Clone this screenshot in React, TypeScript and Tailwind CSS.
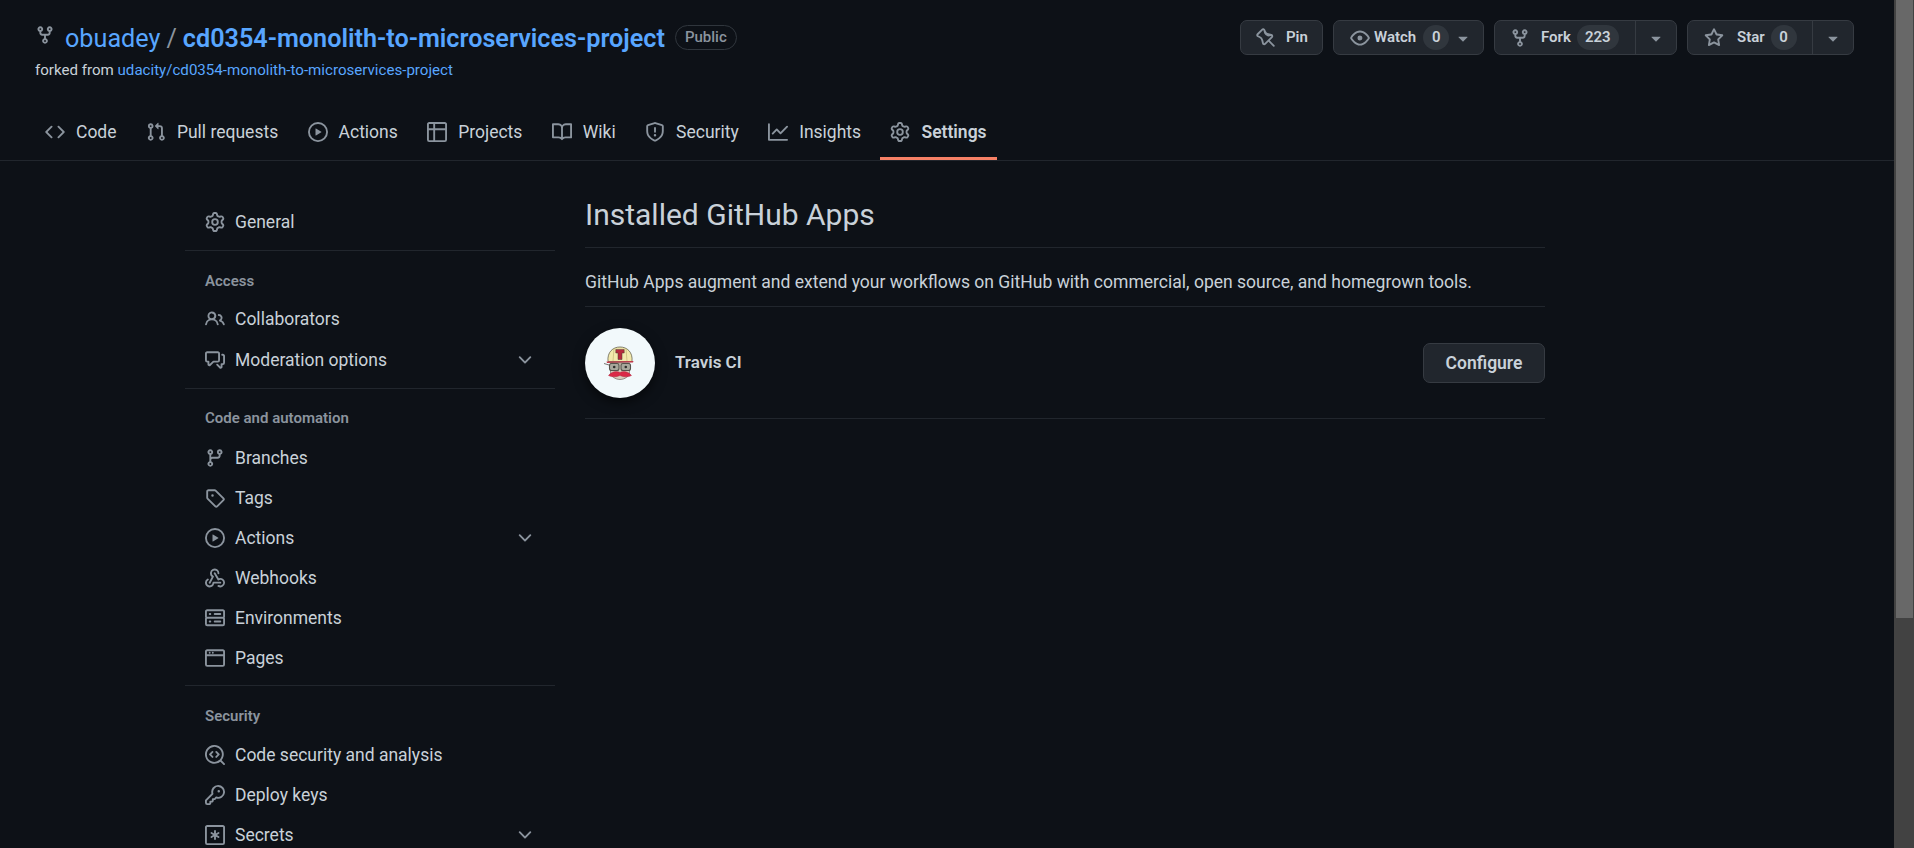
import type { ReactNode } from "react";

const icons: Record<string, ReactNode> = {
  fork: <path d="M5 5.372v.878c0 .414.336.75.75.75h4.5a.75.75 0 0 0 .75-.75v-.878a2.25 2.25 0 1 1 1.5 0v.878a2.25 2.25 0 0 1-2.25 2.25h-1.5v2.128a2.251 2.251 0 1 1-1.5 0V8.5h-1.5A2.25 2.25 0 0 1 3.5 6.25v-.878a2.25 2.25 0 1 1 1.5 0ZM5 3.25a.75.75 0 1 0-1.5 0 .75.75 0 0 0 1.5 0Zm6.75.75a.75.75 0 1 0 0-1.5.75.75 0 0 0 0 1.5Zm-3 8.75a.75.75 0 1 0-1.5 0 .75.75 0 0 0 1.5 0Z" />,
  code: <path d="m11.28 3.22 4.25 4.25a.75.75 0 0 1 0 1.06l-4.25 4.25a.749.749 0 0 1-1.275-.326.749.749 0 0 1 .215-.734L13.94 8l-3.72-3.72a.749.749 0 0 1 .326-1.275.749.749 0 0 1 .734.215Zm-6.56 0a.751.751 0 0 1 1.042.018.751.751 0 0 1 .018 1.042L2.06 8l3.72 3.72a.749.749 0 0 1-.326 1.275.749.749 0 0 1-.734-.215L.47 8.53a.75.75 0 0 1 0-1.06Z" />,
  pull: <path d="M1.5 3.25a2.25 2.25 0 1 1 3 2.122v5.256a2.251 2.251 0 1 1-1.5 0V5.372A2.25 2.25 0 0 1 1.5 3.25Zm5.677-.177L9.573.677A.25.25 0 0 1 10 .854V2.5h1A2.5 2.5 0 0 1 13.5 5v5.628a2.251 2.251 0 1 1-1.5 0V5a1 1 0 0 0-1-1h-1v1.646a.25.25 0 0 1-.427.177L7.177 3.427a.25.25 0 0 1 0-.354ZM3.75 2.5a.75.75 0 1 0 0 1.5.75.75 0 0 0 0-1.5Zm0 9.5a.75.75 0 1 0 0 1.5.75.75 0 0 0 0-1.5Zm8.25.75a.75.75 0 1 0 1.5 0 .75.75 0 0 0-1.5 0Z" />,
  play: <path d="M8 0a8 8 0 1 1 0 16A8 8 0 0 1 8 0ZM1.5 8a6.5 6.5 0 1 0 13 0 6.5 6.5 0 0 0-13 0Zm4.879-2.773 4.264 2.559a.25.25 0 0 1 0 .428l-4.264 2.559A.25.25 0 0 1 6 10.559V5.442a.25.25 0 0 1 .379-.215Z" />,
  table: <path d="M0 1.75C0 .784.784 0 1.75 0h12.5C15.216 0 16 .784 16 1.75v12.5A1.75 1.75 0 0 1 14.25 16H1.75A1.75 1.75 0 0 1 0 14.25ZM6.5 6.5v8h7.75a.25.25 0 0 0 .25-.25V6.5Zm8-1.5V1.75a.25.25 0 0 0-.25-.25H6.5V5Zm-13 1.5v7.75c0 .138.112.25.25.25H5v-8ZM5 5V1.5H1.75a.25.25 0 0 0-.25.25V5Z" />,
  book: <path d="M0 1.75A.75.75 0 0 1 .75 1h4.253c1.227 0 2.317.59 3 1.501A3.743 3.743 0 0 1 11.006 1h4.245a.75.75 0 0 1 .75.75v10.5a.75.75 0 0 1-.75.75h-4.507a2.25 2.25 0 0 0-1.591.659l-.622.621a.75.75 0 0 1-1.06 0l-.622-.621A2.25 2.25 0 0 0 5.258 13H.75a.75.75 0 0 1-.75-.75Zm7.251 10.324.004-5.073-.002-2.253A2.25 2.25 0 0 0 5.003 2.5H1.5v9h3.757a3.75 3.75 0 0 1 1.994.574ZM8.755 4.75l-.004 7.322a3.752 3.752 0 0 1 1.992-.572H14.5v-9h-3.495a2.25 2.25 0 0 0-2.25 2.25Z" />,
  shield: <path d="M7.467.133a1.748 1.748 0 0 1 1.066 0l5.25 1.68A1.75 1.75 0 0 1 15 3.48V7c0 1.566-.32 3.182-1.303 4.682-.983 1.498-2.585 2.813-5.032 3.855a1.697 1.697 0 0 1-1.33 0c-2.447-1.042-4.049-2.357-5.032-3.855C1.32 10.182 1 8.566 1 7V3.48a1.75 1.75 0 0 1 1.217-1.667Zm.61 1.429a.25.25 0 0 0-.153 0l-5.25 1.68a.25.25 0 0 0-.174.238V7c0 1.358.275 2.666 1.057 3.86.784 1.194 2.121 2.34 4.366 3.297a.196.196 0 0 0 .154 0c2.245-.956 3.582-2.104 4.366-3.298C13.225 9.666 13.5 8.36 13.5 7V3.48a.251.251 0 0 0-.174-.237l-5.25-1.68ZM8.75 4.75v3a.75.75 0 0 1-1.5 0v-3a.75.75 0 0 1 1.5 0ZM9 10.5a1 1 0 1 1-2 0 1 1 0 0 1 2 0Z" />,
  graph: <path d="M1.5 1.75V13.5h13.75a.75.75 0 0 1 0 1.5H.75a.75.75 0 0 1-.75-.75V1.75a.75.75 0 0 1 1.5 0Zm14.28 2.53-5.25 5.25a.75.75 0 0 1-1.06 0L7 7.06 4.28 9.78a.751.751 0 0 1-1.042-.018.751.751 0 0 1-.018-1.042l3.25-3.25a.75.75 0 0 1 1.06 0L10 7.94l4.72-4.72a.751.751 0 0 1 1.042.018.751.751 0 0 1 .018 1.042Z" />,
  gear: <path d="M8 0a8.2 8.2 0 0 1 .701.031C9.444.095 9.99.645 10.16 1.29l.288 1.107c.018.066.079.158.212.224.231.114.454.243.668.386.123.082.233.09.299.071l1.103-.303c.644-.176 1.392.021 1.82.63.27.385.506.792.704 1.218.315.675.111 1.422-.364 1.891l-.814.806c-.049.048-.098.147-.088.294.016.257.016.515 0 .772-.01.147.038.246.088.294l.814.806c.475.469.679 1.216.364 1.891a7.977 7.977 0 0 1-.704 1.217c-.428.61-1.176.807-1.82.63l-1.102-.302c-.067-.019-.177-.011-.3.071a5.909 5.909 0 0 1-.668.386c-.133.066-.194.158-.211.224l-.29 1.106c-.168.646-.715 1.196-1.458 1.26a8.006 8.006 0 0 1-1.402 0c-.743-.064-1.289-.614-1.458-1.26l-.289-1.106c-.018-.066-.079-.158-.212-.224a5.738 5.738 0 0 1-.668-.386c-.123-.082-.233-.09-.299-.071l-1.103.303c-.644.176-1.392-.021-1.82-.63a8.12 8.12 0 0 1-.704-1.218c-.315-.675-.111-1.422.363-1.891l.815-.806c.05-.048.098-.147.088-.294a6.214 6.214 0 0 1 0-.772c.01-.147-.038-.246-.088-.294l-.815-.806C.635 6.045.431 5.298.746 4.623a7.92 7.92 0 0 1 .704-1.217c.428-.61 1.176-.807 1.82-.63l1.102.302c.067.019.177.011.3-.071.214-.143.437-.272.668-.386.133-.066.194-.158.211-.224l.29-1.106C6.009.645 6.556.095 7.299.03 7.53.01 7.764 0 8 0Zm-.571 1.525c-.036.003-.108.036-.137.146l-.289 1.105c-.147.561-.549.967-.998 1.189-.173.086-.34.183-.5.29-.417.278-.97.423-1.529.27l-1.103-.303c-.109-.03-.175.016-.195.045-.22.312-.412.644-.573.99-.014.031-.021.11.059.19l.815.806c.411.406.562.957.53 1.456a4.709 4.709 0 0 0 0 .582c.032.499-.119 1.05-.53 1.456l-.815.806c-.081.08-.073.159-.059.19.162.346.353.677.573.989.02.03.085.076.195.046l1.102-.303c.56-.153 1.113-.008 1.53.27.161.107.328.204.501.29.447.222.85.629.997 1.189l.289 1.105c.029.109.101.143.137.146a6.6 6.6 0 0 0 1.142 0c.036-.003.108-.036.137-.146l.289-1.105c.147-.561.549-.967.998-1.189.173-.086.34-.183.5-.29.417-.278.97-.423 1.529-.27l1.103.303c.109.029.175-.016.195-.045.22-.313.411-.644.573-.99.014-.031.021-.11-.059-.19l-.815-.806c-.411-.406-.562-.957-.53-1.456a4.709 4.709 0 0 0 0-.582c-.032-.499.119-1.05.53-1.456l.815-.806c.081-.08.073-.159.059-.19a6.464 6.464 0 0 0-.573-.989c-.02-.03-.085-.076-.195-.046l-1.102.303c-.56.153-1.113.008-1.53-.27a4.44 4.44 0 0 0-.501-.29c-.447-.222-.85-.629-.997-1.189l-.289-1.105c-.029-.11-.101-.143-.137-.146a6.6 6.6 0 0 0-1.142 0ZM11 8a3 3 0 1 1-6 0 3 3 0 0 1 6 0ZM9.5 8a1.5 1.5 0 1 0-3.001.001A1.5 1.5 0 0 0 9.5 8Z" />,
  pin: <path d="M4.456.734a1.75 1.75 0 0 1 2.826.504l.613 1.327a3.081 3.081 0 0 0 2.084 1.707l2.454.584c1.332.317 1.8 1.972.832 2.94L11.06 10l3.72 3.72a.748.748 0 0 1-.332 1.265.75.75 0 0 1-.729-.205L10 11.06l-2.204 2.205c-.968.968-2.623.5-2.94-.832l-.584-2.454a3.081 3.081 0 0 0-1.707-2.084l-1.327-.613a1.75 1.75 0 0 1-.504-2.826L4.456.734ZM5.92 1.866a.25.25 0 0 0-.404-.072L1.794 5.516a.25.25 0 0 0 .072.404l1.328.613A4.582 4.582 0 0 1 5.73 9.63l.584 2.454a.25.25 0 0 0 .42.12l5.47-5.47a.25.25 0 0 0-.12-.42L9.63 6.73a4.581 4.581 0 0 1-3.098-2.537L5.92 1.866Z" />,
  eye: <path d="M8 2c1.981 0 3.671.992 4.933 2.078 1.27 1.091 2.187 2.345 2.637 3.023a1.62 1.62 0 0 1 0 1.798c-.45.678-1.367 1.932-2.637 3.023C11.67 13.008 9.981 14 8 14c-1.981 0-3.671-.992-4.933-2.078C1.797 10.83.88 9.576.43 8.898a1.62 1.62 0 0 1 0-1.798c.45-.677 1.367-1.931 2.637-3.022C4.33 2.992 6.019 2 8 2ZM1.679 7.932a.12.12 0 0 0 0 .136c.411.622 1.241 1.75 2.366 2.717C5.176 11.758 6.527 12.5 8 12.5c1.473 0 2.825-.742 3.955-1.715 1.124-.967 1.954-2.096 2.366-2.717a.12.12 0 0 0 0-.136c-.412-.621-1.242-1.75-2.366-2.717C10.824 4.242 9.473 3.5 8 3.5c-1.473 0-2.825.742-3.955 1.715-1.124.967-1.954 2.096-2.366 2.717ZM8 10a2 2 0 1 1-.001-3.999A2 2 0 0 1 8 10Z" />,
  star: <path d="M8 .25a.75.75 0 0 1 .673.418l1.882 3.815 4.21.612a.75.75 0 0 1 .416 1.279l-3.046 2.97.719 4.192a.751.751 0 0 1-1.088.791L8 12.347l-3.766 1.98a.75.75 0 0 1-1.088-.79l.72-4.194L.818 6.374a.75.75 0 0 1 .416-1.28l4.21-.611L7.327.668A.75.75 0 0 1 8 .25Zm0 2.445L6.615 5.5a.75.75 0 0 1-.564.41l-3.097.45 2.24 2.184a.75.75 0 0 1 .216.664l-.528 3.084 2.769-1.456a.75.75 0 0 1 .698 0l2.77 1.456-.53-3.084a.75.75 0 0 1 .216-.664l2.24-2.183-3.096-.45a.75.75 0 0 1-.564-.41L8 2.694Z" />,
  caret: <path d="m4.427 7.427 3.396 3.396a.25.25 0 0 0 .354 0l3.396-3.396A.25.25 0 0 0 11.396 7H4.604a.25.25 0 0 0-.177.427Z" />,
  chevron: <path d="M12.78 5.22a.749.749 0 0 1 0 1.06l-4.25 4.25a.749.749 0 0 1-1.06 0L3.22 6.28a.749.749 0 1 1 1.06-1.06L8 8.939l3.72-3.719a.749.749 0 0 1 1.06 0Z" />,
  people: <path d="M2 5.5a3.5 3.5 0 1 1 5.898 2.549 5.508 5.508 0 0 1 3.034 4.084.75.75 0 1 1-1.482.235 4 4 0 0 0-7.9 0 .75.75 0 0 1-1.482-.236A5.507 5.507 0 0 1 3.102 8.05 3.493 3.493 0 0 1 2 5.5ZM11 4a3.001 3.001 0 0 1 2.22 5.018 5.01 5.01 0 0 1 2.56 3.012.749.749 0 0 1-.885.954.752.752 0 0 1-.549-.514 3.507 3.507 0 0 0-2.522-2.372.75.75 0 0 1-.574-.73v-.352a.75.75 0 0 1 .416-.672A1.5 1.5 0 0 0 11 5.5.75.75 0 0 1 11 4Zm-5.5-.5a2 2 0 1 0-.001 3.999A2 2 0 0 0 5.5 3.5Z" />,
  comment: <path d="M1.75 1h8.5c.966 0 1.75.784 1.75 1.75v5.5A1.75 1.75 0 0 1 10.25 10H7.061l-2.574 2.573A1.458 1.458 0 0 1 2 11.543V10h-.25A1.75 1.75 0 0 1 0 8.25v-5.5C0 1.784.784 1 1.75 1ZM1.5 2.75v5.5c0 .138.112.25.25.25h1a.75.75 0 0 1 .75.75v2.19l2.72-2.72a.749.749 0 0 1 .53-.22h3.5a.25.25 0 0 0 .25-.25v-5.5a.25.25 0 0 0-.25-.25h-8.5a.25.25 0 0 0-.25.25Zm13 2a.25.25 0 0 0-.25-.25h-.5a.75.75 0 0 1 0-1.5h.5c.966 0 1.75.784 1.75 1.75v5.5A1.75 1.75 0 0 1 14.25 12H14v1.543a1.458 1.458 0 0 1-2.487 1.03L9.22 12.28a.749.749 0 0 1 .326-1.275.749.749 0 0 1 .734.215l2.22 2.22v-2.19a.75.75 0 0 1 .75-.75h1a.25.25 0 0 0 .25-.25Z" />,
  branch: <path d="M9.5 3.25a2.25 2.25 0 1 1 3 2.122V6A2.5 2.5 0 0 1 10 8.5H6a1 1 0 0 0-1 1v1.128a2.251 2.251 0 1 1-1.5 0V5.372a2.25 2.25 0 1 1 1.5 0v1.836A2.493 2.493 0 0 1 6 7h4a1 1 0 0 0 1-1v-.628A2.25 2.25 0 0 1 9.5 3.25Zm-6 0a.75.75 0 1 0 1.5 0 .75.75 0 0 0-1.5 0Zm8.25-.75a.75.75 0 1 0 0 1.5.75.75 0 0 0 0-1.5ZM4.25 12a.75.75 0 1 0 0 1.5.75.75 0 0 0 0-1.5Z" />,
  tag: <path d="M1 7.775V2.75C1 1.784 1.784 1 2.75 1h5.025c.464 0 .91.184 1.238.513l6.25 6.25a1.75 1.75 0 0 1 0 2.474l-5.026 5.026a1.75 1.75 0 0 1-2.474 0l-6.25-6.25A1.752 1.752 0 0 1 1 7.775Zm1.5 0c0 .066.026.13.073.177l6.25 6.25a.25.25 0 0 0 .354 0l5.025-5.025a.25.25 0 0 0 0-.354l-6.25-6.25a.25.25 0 0 0-.177-.073H2.75a.25.25 0 0 0-.25.25ZM6 5a1 1 0 1 1 0 2 1 1 0 0 1 0-2Z" />,
  webhook: (
    <>
      <path d="M5.5 4.25a2.25 2.25 0 0 1 4.5 0 .75.75 0 0 0 1.5 0 3.75 3.75 0 1 0-6.14 2.889l-2.272 4.258a.75.75 0 0 0 1.324.706L7 7.25a.75.75 0 0 0-.309-1.015A2.25 2.25 0 0 1 5.5 4.25Z" />
      <path d="M7.364 3.607a.75.75 0 0 1 1.03.257l2.608 4.349a3.75 3.75 0 1 1-.628 6.785.75.75 0 0 1 .752-1.299 2.25 2.25 0 1 0-.033-3.88.75.75 0 0 1-1.03-.256L7.107 4.636a.75.75 0 0 1 .257-1.03Z" />
      <path d="M2.9 8.776A.75.75 0 0 1 2.625 9.8 2.25 2.25 0 1 0 6 11.75a.75.75 0 0 1 .75-.751h5.5a.75.75 0 0 1 0 1.5H7.425a3.751 3.751 0 1 1-5.55-3.998.75.75 0 0 1 1.024.274Z" />
    </>
  ),
  server: <path d="M1.75 1h12.5c.966 0 1.75.784 1.75 1.75v4c0 .372-.116.717-.314 1 .198.283.314.628.314 1v4a1.75 1.75 0 0 1-1.75 1.75H1.75A1.75 1.75 0 0 1 0 12.75v-4c0-.358.109-.707.314-1a1.739 1.739 0 0 1-.314-1v-4C0 1.784.784 1 1.75 1ZM1.5 2.75v4c0 .138.112.25.25.25h12.5a.25.25 0 0 0 .25-.25v-4a.25.25 0 0 0-.25-.25H1.75a.25.25 0 0 0-.25.25ZM1.75 8.5a.25.25 0 0 0-.25.25v4c0 .138.112.25.25.25h12.5a.25.25 0 0 0 .25-.25v-4a.25.25 0 0 0-.25-.25ZM7 4.75A.75.75 0 0 1 7.75 4h4.5a.75.75 0 0 1 0 1.5h-4.5A.75.75 0 0 1 7 4.75ZM7.75 10h4.5a.75.75 0 0 1 0 1.5h-4.5a.75.75 0 0 1 0-1.5ZM3 4.75A.75.75 0 0 1 3.75 4h.5a.75.75 0 0 1 0 1.5h-.5A.75.75 0 0 1 3 4.75ZM3.75 10h.5a.75.75 0 0 1 0 1.5h-.5a.75.75 0 0 1 0-1.5Z" />,
  browser: <path d="M0 2.75C0 1.784.784 1 1.75 1h12.5c.966 0 1.75.784 1.75 1.75v10.5A1.75 1.75 0 0 1 14.25 15H1.75A1.75 1.75 0 0 1 0 13.25ZM14.5 6.5h-13v6.75c0 .138.112.25.25.25h12.5a.25.25 0 0 0 .25-.25Zm-13-1.5h13V2.75a.25.25 0 0 0-.25-.25H1.75a.25.25 0 0 0-.25.25ZM3.75 3a.75.75 0 0 1 0 1.5.75.75 0 0 1 0-1.5Zm2.5 0a.75.75 0 0 1 0 1.5.75.75 0 0 1 0-1.5Z" />,
  codescan: (
    <>
      <path d="M8.47 4.97a.75.75 0 0 0 0 1.06L9.94 7.5 8.47 8.97a.75.75 0 1 0 1.06 1.06l2-2a.75.75 0 0 0 0-1.06l-2-2a.75.75 0 0 0-1.06 0ZM6.53 6.03a.75.75 0 0 0-1.06-1.06l-2 2a.75.75 0 0 0 0 1.06l2 2a.75.75 0 1 0 1.06-1.06L5.06 7.5l1.47-1.47Z" />
      <path d="M12.246 13.307a7.501 7.501 0 1 1 1.06-1.06l2.474 2.473a.749.749 0 0 1-.326 1.275.749.749 0 0 1-.734-.215ZM1.5 7.5a6.002 6.002 0 0 0 3.608 5.504 6.002 6.002 0 0 0 6.486-1.117.748.748 0 0 1 .292-.293A6 6 0 1 0 1.5 7.5Z" />
    </>
  ),
  key: <path d="M10.5 0a5.499 5.499 0 1 1-1.288 10.848l-.932.932a.749.749 0 0 1-.53.22H7v.75a.749.749 0 0 1-.22.53l-.5.5a.749.749 0 0 1-.53.22H5v.75a.749.749 0 0 1-.22.53l-.5.5a.749.749 0 0 1-.53.22h-2A1.75 1.75 0 0 1 0 14.25v-2c0-.199.079-.389.22-.53l4.932-4.932A5.5 5.5 0 0 1 10.5 0Zm-4 5.5c-.001.431.069.86.205 1.269a.75.75 0 0 1-.181.768L1.5 12.56v1.69c0 .138.112.25.25.25h1.69l.06-.06v-1.19a.75.75 0 0 1 .75-.75h1.19l.06-.06v-1.19a.75.75 0 0 1 .75-.75h1.19l1.023-1.025a.75.75 0 0 1 .768-.18A4 4 0 1 0 6.5 5.5ZM11 6a1 1 0 1 1 0-2 1 1 0 0 1 0 2Z" />,
  asterisk: (
    <>
      <path d="M0 1.75C0 .784.784 0 1.75 0h12.5C15.216 0 16 .784 16 1.75v12.5A1.75 1.75 0 0 1 14.25 16H1.75A1.75 1.75 0 0 1 0 14.25Zm1.75-.25a.25.25 0 0 0-.25.25v12.5c0 .138.112.25.25.25h12.5a.25.25 0 0 0 .25-.25V1.75a.25.25 0 0 0-.25-.25Z" />
      <path d="M8 4a.75.75 0 0 1 .75.75V6.7l1.69-.975a.75.75 0 0 1 .75 1.3L9.5 8l1.69.976a.75.75 0 0 1-.75 1.298L8.75 9.3v1.951a.75.75 0 0 1-1.5 0V9.299l-1.69.976a.75.75 0 0 1-.75-1.3L6.5 8l-1.69-.975a.75.75 0 0 1 .75-1.3l1.69.976V4.75A.75.75 0 0 1 8 4Z" />
    </>
  ),
};

function Icon({ name, className = "w-5 h-5" }: { name: string; className?: string }) {
  return (
    <svg viewBox="0 0 16 16" fill="currentColor" className={`${className} shrink-0 text-[#8b949e]`}>
      {icons[name]}
    </svg>
  );
}

function TravisLogo() {
  return (
    <svg viewBox="0 0 34 34" className="w-[34px] h-[34px]">
      {/* helmet */}
      <path d="M5 15.5 C4 6 10 1 17 1 C24 1 30 6 29 15.5 Z" fill="#f3e9ac" stroke="#55523f" strokeWidth="0.7" />
      <path d="M11 2.8 L10 15 M23 2.8 L24 15" stroke="#c4b877" strokeWidth="0.7" />
      <path d="M12.8 3.4 H21.2 V7 H19 V13.5 H15 V7 H12.8 Z" fill="#b72a3c" stroke="#4a3a30" strokeWidth="0.5" />
      <path d="M3.5 15.5 L30.5 15 L30 16.6 L4 17 Z" fill="#c23a4a" />
      {/* face */}
      <path d="M7.5 17 H26.5 V26 C26.5 30 22 33.5 17 33.5 C12 33.5 7.5 30 7.5 26 Z" fill="#d9cdbd" stroke="#5a5048" strokeWidth="0.6" />
      {/* glasses */}
      <rect x="6.5" y="17.5" width="9.5" height="7" rx="2" fill="#a9a79c" stroke="#55534c" strokeWidth="1.1" />
      <rect x="18" y="17.5" width="9.5" height="7" rx="2" fill="#a9a79c" stroke="#55534c" strokeWidth="1.1" />
      <circle cx="11.2" cy="21" r="1.3" fill="#2f2f2c" />
      <circle cx="22.8" cy="21" r="1.3" fill="#2f2f2c" />
      <path d="M1 17.5 L6 19" stroke="#55534c" strokeWidth="0.8" />
      {/* mustache */}
      <path d="M5.5 29.5 C9 25 14 25 17 26.5 C20 25 25 25 28.5 29.5 C25 31.5 20 31 17 29.5 C14 31 9 31.5 5.5 29.5 Z" fill="#da2a47" stroke="#a3233a" strokeWidth="0.4" />
    </svg>
  );
}

const tabs = [
  { icon: "code", label: "Code" },
  { icon: "pull", label: "Pull requests" },
  { icon: "play", label: "Actions" },
  { icon: "table", label: "Projects" },
  { icon: "book", label: "Wiki" },
  { icon: "shield", label: "Security" },
  { icon: "graph", label: "Insights" },
  { icon: "gear", label: "Settings", active: true },
];

function Counter({ value }: { value: string }) {
  return (
    <span className="h-[25px] px-[8px] min-w-[26px] rounded-full bg-[#30363d] flex items-center justify-center">
      {value}
    </span>
  );
}

function RepoActions() {
  const base =
    "h-[35px] flex items-center bg-[#21262d] border border-[#363b42] rounded-[7px] text-[15px] font-semibold text-[#c9d1d9]";
  const caret = <Icon name="caret" className="w-5 h-5" />;
  return (
    <div className="flex items-center gap-[10px]">
      <div className={`${base} w-[83px] pl-[15px] gap-[10px]`}>
        <Icon name="pin" />
        <span>Pin</span>
      </div>
      <div className={`${base} w-[151px] pl-[16px]`}>
        <Icon name="eye" />
        <span className="ml-[4px]">Watch</span>
        <span className="ml-[7px]">
          <Counter value="0" />
        </span>
        <span className="ml-[4px]">{caret}</span>
      </div>
      <div className={`${base} w-[183px]`}>
        <div className="w-[141px] h-full flex items-center pl-[15px] border-r border-[#363b42]">
          <Icon name="fork" />
          <span className="ml-[11px]">Fork</span>
          <span className="ml-[6px]">
            <Counter value="223" />
          </span>
        </div>
        <div className="flex-1 flex justify-center">{caret}</div>
      </div>
      <div className={`${base} w-[167px]`}>
        <div className="w-[125px] h-full flex items-center pl-[16px] border-r border-[#363b42]">
          <Icon name="star" />
          <span className="ml-[13px]">Star</span>
          <span className="ml-[6px]">
            <Counter value="0" />
          </span>
        </div>
        <div className="flex-1 flex justify-center">{caret}</div>
      </div>
    </div>
  );
}

function Header() {
  return (
    <header className="border-b border-[#21262d] h-[161px] flex flex-col pl-[35px] pr-[40px] pt-[20px]">
      <div className="flex justify-between items-start h-[66px]">
        <div>
          <div className="flex items-center h-[35px]">
            <Icon name="fork" className="w-5 h-5 -mt-[5px]" />
            <a className="ml-[10px] mt-[1px] text-[25.2px] leading-[35px] text-[#58a6ff]">obuadey</a>
            <span className="mx-[6px] mt-[1px] text-[25.2px] leading-[35px] text-[#8b949e]">/</span>
            <a className="mt-[1px] text-[25.2px] leading-[35px] font-semibold text-[#58a6ff]">
              cd0354-monolith-to-microservices-project
            </a>
            <span className="ml-[10px] h-[25px] px-[9px] flex items-center rounded-full border border-[#30363d] text-[15px] font-medium text-[#8b949e]">
              Public
            </span>
          </div>
          <div className="text-[15.1px] leading-[20px] mt-[5px] text-[#c9d1d9]">
            forked from <a className="text-[#58a6ff]">udacity/cd0354-monolith-to-microservices-project</a>
          </div>
        </div>
        <RepoActions />
      </div>
      <nav className="flex gap-[9.4px] mt-auto">
        {tabs.map((tab) => (
          <a
            key={tab.label}
            className={`h-[56px] px-[10px] flex items-center gap-[11px] text-[17.5px] border-b-[3px] pt-[4px] text-[#c9d1d9] ${
              tab.active ? "border-[#f78166] font-semibold" : "border-transparent"
            }`}
          >
            <Icon name={tab.icon} className="w-5 h-5 -mt-[2px]" />
            <span>{tab.label}</span>
          </a>
        ))}
      </nav>
    </header>
  );
}

function SideItem({ icon, label, more, className = "" }: { icon: string; label: string; more?: boolean; className?: string }) {
  return (
    <a className={`h-[40px] pl-[20px] pr-[20px] flex items-center gap-[10px] text-[17.5px] text-[#c9d1d9] ${className}`}>
      <Icon name={icon} />
      <span className="flex-1">{label}</span>
      {more && <Icon name="chevron" />}
    </a>
  );
}

function SideHeading({ children, className }: { children: ReactNode; className: string }) {
  return (
    <h3 className={`pl-[20px] text-[15px] leading-[20px] font-semibold text-[#8b949e] ${className}`}>
      {children}
    </h3>
  );
}

function Sidebar() {
  return (
    <aside className="w-[370px] shrink-0 pt-[41px]">
      <div className="pb-[8px] border-b border-[#21262d]">
        <SideItem icon="gear" label="General" />
      </div>
      <div className="pb-[8px] border-b border-[#21262d]">
        <SideHeading className="pt-[20px] pb-[8px]">Access</SideHeading>
        <SideItem icon="people" label="Collaborators" />
        <SideItem icon="comment" label="Moderation options" more className="mt-[1px]" />
      </div>
      <div className="pb-[7px] border-b border-[#21262d]">
        <SideHeading className="pt-[19px] pb-[10px]">Code and automation</SideHeading>
        <SideItem icon="branch" label="Branches" />
        <SideItem icon="tag" label="Tags" />
        <SideItem icon="play" label="Actions" more />
        <SideItem icon="webhook" label="Webhooks" />
        <SideItem icon="server" label="Environments" />
        <SideItem icon="browser" label="Pages" />
      </div>
      <SideHeading className="pt-[20px] pb-[9px]">Security</SideHeading>
      <SideItem icon="codescan" label="Code security and analysis" />
      <SideItem icon="key" label="Deploy keys" />
      <SideItem icon="asterisk" label="Secrets" more />
    </aside>
  );
}

function InstalledApps() {
  return (
    <main className="w-[960px] pt-[34px] text-[#c9d1d9]">
      <h2 className="text-[30px] leading-[38px] pt-[1px] pb-[13px] border-b border-[#21262d]">Installed GitHub Apps</h2>
      <p className="text-[17.55px] leading-[20px] pt-[24px] pb-[14px] border-b border-[#21262d]">
        GitHub Apps augment and extend your workflows on GitHub with commercial, open source, and homegrown tools.
      </p>
      <div className="pt-[21px] pb-[20px] flex items-center border-b border-[#21262d]">
        <div className="w-[70px] h-[70px] rounded-full bg-[#f2f9fb] flex items-center justify-center shadow-[0_4px_12px_rgba(0,0,0,0.6)]">
          <TravisLogo />
        </div>
        <span className="ml-[20px] flex-1 text-[17px] font-semibold">Travis CI</span>
        <button className="w-[122px] h-[40px] pt-[1px] bg-[#21262d] border border-[#363b42] rounded-[7px] text-[17.5px] font-semibold">
          Configure
        </button>
      </div>
    </main>
  );
}

export default function App() {
  return (
    <div className="h-screen overflow-hidden flex bg-[#0d1117] font-['Roboto',sans-serif]">
      <div className="flex-1 min-w-0">
        <Header />
        <div className="flex gap-[30px] pl-[185px]">
          <Sidebar />
          <InstalledApps />
        </div>
      </div>
      <div className="w-[20px] h-full bg-[#424242] pl-[2px] pr-[1px]">
        <div className="h-[618px] bg-[#686868]" />
      </div>
    </div>
  );
}
